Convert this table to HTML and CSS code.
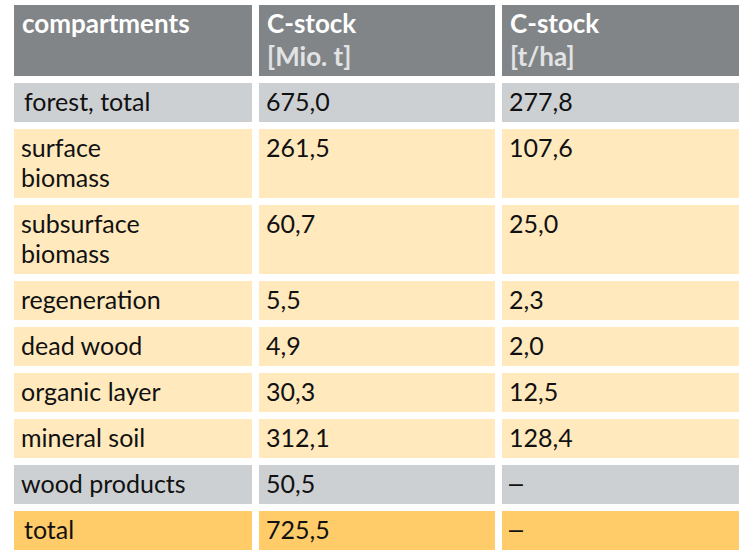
FILE: index.html
```html
<!DOCTYPE html>
<html lang="en">
<head>
<meta charset="utf-8">
<title>C-stock compartments</title>
<link rel="stylesheet" href="styles.css">
</head>
<body>
<div class="table">
  <div class="cell head">compartments</div>
  <div class="cell head">C-stock<br><span class="unit">[Mio. t]</span></div>
  <div class="cell head">C-stock<br><span class="unit">[t/ha]</span></div>

  <div class="cell grey indent">forest, total</div>
  <div class="cell grey">675,0</div>
  <div class="cell grey">277,8</div>

  <div class="cell cream">surface<br>biomass</div>
  <div class="cell cream">261,5</div>
  <div class="cell cream">107,6</div>

  <div class="cell cream">subsurface<br>biomass</div>
  <div class="cell cream">60,7</div>
  <div class="cell cream">25,0</div>

  <div class="cell cream">regeneration</div>
  <div class="cell cream">5,5</div>
  <div class="cell cream">2,3</div>

  <div class="cell cream">dead wood</div>
  <div class="cell cream">4,9</div>
  <div class="cell cream">2,0</div>

  <div class="cell cream">organic layer</div>
  <div class="cell cream">30,3</div>
  <div class="cell cream">12,5</div>

  <div class="cell cream">mineral soil</div>
  <div class="cell cream">312,1</div>
  <div class="cell cream">128,4</div>

  <div class="cell grey">wood products</div>
  <div class="cell grey">50,5</div>
  <div class="cell grey dash">–</div>

  <div class="cell orange indent">total</div>
  <div class="cell orange">725,5</div>
  <div class="cell orange dash">–</div>
</div>
</body>
</html>
```

FILE: styles.css
```css
html, body {
  margin: 0;
  padding: 0;
  background: #ffffff;
}

body {
  padding: 5px 0 0 14px;
  font-family: Lato, "Open Sans", sans-serif;
  font-size: 25px;
  color: #111111;
}

.table {
  display: grid;
  grid-template-columns: 238px 236px 237px;
  column-gap: 7px;
  row-gap: 7px;
}

.cell {
  padding: 3px 7px 6px 7px;
  line-height: 30px;
}

.head {
  background: #818588;
  color: #ffffff;
  font-weight: 700;
  font-size: 26px;
  line-height: 33px;
  padding: 2px 7px 3px 8px;
}

.unit {
  color: #e2e3e4;
}

.grey {
  background: #cdd0d3;
}

.cream {
  background: #ffe9bd;
}

.orange {
  background: #ffcc69;
}

.indent {
  padding-left: 10px;
}

.dash {
  font-family: "Liberation Sans", sans-serif;
}
```
